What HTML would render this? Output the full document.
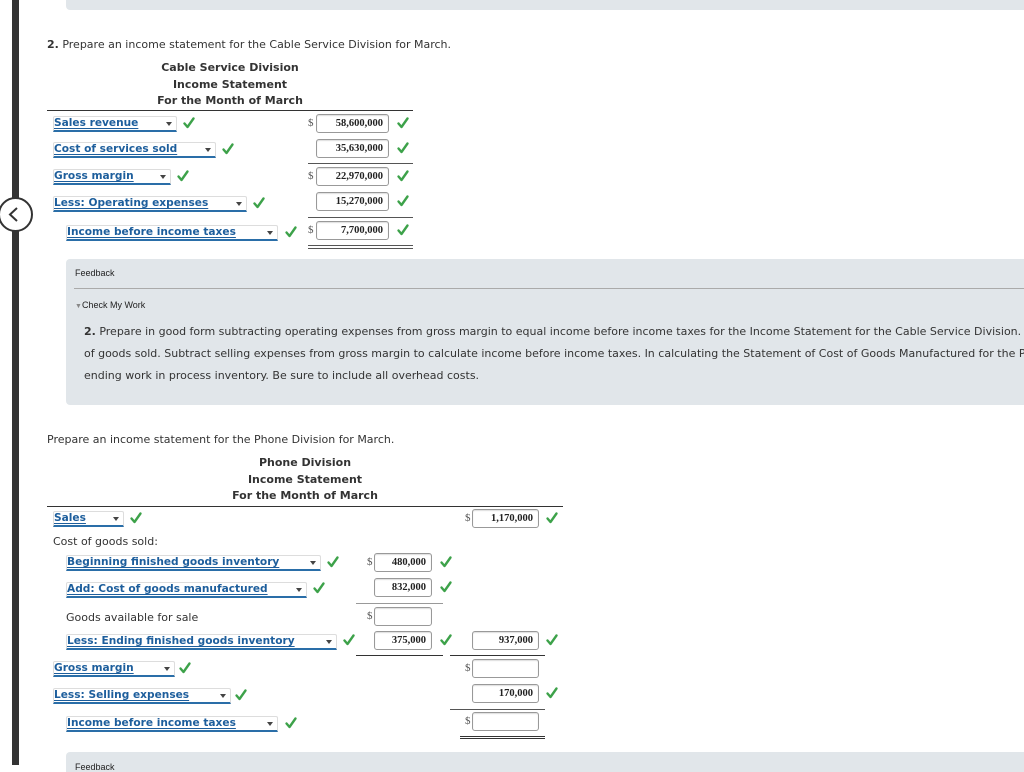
<!DOCTYPE html>
<html><head><meta charset="utf-8"><style>
*{margin:0;padding:0;box-sizing:border-box}
body{width:1024px;height:765px;overflow:hidden;background:#fff;position:relative;font-family:"DejaVu Sans","Liberation Sans",sans-serif;color:#333}
.a{position:absolute;white-space:nowrap}
.t{font-size:11px}
.b{font-weight:bold}
.sel{position:absolute;height:16px;border:1px solid #ddd;border-bottom:2px solid #2a6ea8;border-radius:2px 2px 0 0;color:#1d5e9c;font-weight:bold;font-size:10.6px;line-height:13px;padding-left:0;text-decoration:underline;text-underline-offset:2px}
.sel:after{content:"";position:absolute;right:4px;top:5px;border-left:3px solid transparent;border-right:3px solid transparent;border-top:4px solid #444}
.in{position:absolute;height:19px;border:1px solid #999;border-radius:3px;font-family:"Liberation Serif",serif;font-weight:bold;font-size:10.5px;text-align:right;padding-right:5px;line-height:17px;color:#222;box-shadow:inset 0 1px 1px #ddd}
.d{position:absolute;font-family:"Liberation Serif",serif;font-size:11px;color:#555}
.hl{position:absolute;height:1px;background:#555}
.ctr{position:absolute;text-align:center;font-weight:bold;font-size:11px;line-height:16.5px}
</style></head><body>
<div class="a" style="left:12px;top:0;width:7px;height:765px;background:#333"></div>
<div class="a" style="left:-2px;top:197px;width:35px;height:35px;border-radius:50%;background:#fff;border:2px solid #333"></div>
<svg class="a" style="left:6px;top:205px" width="16" height="19"><path d="M11 3 L4 9.5 L11 16" stroke="#333" stroke-width="2" fill="none"/></svg>
<div class="a" style="left:66px;top:0;width:960px;height:10px;background:#e1e6ea;border-radius:0 0 0 4px"></div>

<div class="a t" style="left:47px;top:38px"><b>2.</b> Prepare an income statement for the Cable Service Division for March.</div>
<div class="ctr" style="left:130px;top:60px;width:200px">Cable Service Division<br>Income Statement<br>For the Month of March</div>
<div class="hl" style="left:47px;top:110px;width:366px;background:#333"></div>

<div class="sel" style="left:53px;top:116px;width:124px">Sales revenue</div>
<div class="sel" style="left:53px;top:142px;width:163px">Cost of services sold</div>
<div class="sel" style="left:53px;top:169px;width:118px">Gross margin</div>
<div class="sel" style="left:53px;top:196px;width:194px">Less: Operating expenses</div>
<div class="sel" style="left:66px;top:225px;width:212px">Income before income taxes</div>
<div class="d" style="left:308px;top:117px">$</div>
<div class="in" style="left:316px;top:114px;width:73px">58,600,000</div>
<div class="in" style="left:316px;top:139px;width:73px">35,630,000</div>
<div class="hl" style="left:308px;top:163px;width:105px"></div>
<div class="d" style="left:308px;top:170px">$</div>
<div class="in" style="left:316px;top:167px;width:73px">22,970,000</div>
<div class="in" style="left:316px;top:192px;width:73px">15,270,000</div>
<div class="hl" style="left:308px;top:217px;width:105px"></div>
<div class="d" style="left:308px;top:224px">$</div>
<div class="in" style="left:316px;top:221px;width:73px">7,700,000</div>
<div class="hl" style="left:308px;top:245px;width:105px"></div>
<div class="hl" style="left:308px;top:248px;width:105px"></div>

<div class="a" style="left:66px;top:259px;width:960px;height:146px;background:#e1e6ea;border-radius:4px 0 0 4px"></div>
<div class="a" style="left:75px;top:268px;font-family:'Liberation Sans',sans-serif;font-size:9px;color:#222">Feedback</div>
<div class="hl" style="left:74px;top:288px;width:952px;background:#aaa"></div>
<div class="a" style="left:75px;top:300px;font-family:'Liberation Sans',sans-serif;font-size:9px;color:#222"><span style="color:#888;font-size:7px">▼</span>Check My Work</div>
<div class="a t" style="left:84px;top:321px;line-height:22px"><b>2.</b> Prepare in good form subtracting operating expenses from gross margin to equal income before income taxes for the Income Statement for the Cable Service Division. I<br>of goods sold. Subtract selling expenses from gross margin to calculate income before income taxes. In calculating the Statement of Cost of Goods Manufactured for the Pl<br>ending work in process inventory. Be sure to include all overhead costs.</div>

<div class="a t" style="left:47px;top:433px">Prepare an income statement for the Phone Division for March.</div>
<div class="ctr" style="left:205px;top:455px;width:200px">Phone Division<br>Income Statement<br>For the Month of March</div>
<div class="hl" style="left:47px;top:506px;width:516px;background:#333"></div>

<div class="sel" style="left:53px;top:511px;width:71px">Sales</div>
<div class="a t" style="left:53px;top:535px">Cost of goods sold:</div>
<div class="sel" style="left:66px;top:555px;width:255px">Beginning finished goods inventory</div>
<div class="sel" style="left:66px;top:582px;width:241px">Add: Cost of goods manufactured</div>
<div class="a t" style="left:66px;top:611px">Goods available for sale</div>
<div class="sel" style="left:66px;top:634px;width:271px">Less: Ending finished goods inventory</div>
<div class="sel" style="left:53px;top:661px;width:122px">Gross margin</div>
<div class="sel" style="left:53px;top:688px;width:178px">Less: Selling expenses</div>
<div class="sel" style="left:66px;top:716px;width:212px">Income before income taxes</div>

<div class="d" style="left:465px;top:512px">$</div>
<div class="in" style="left:472px;top:509px;width:67px">1,170,000</div>
<div class="d" style="left:367px;top:556px">$</div>
<div class="in" style="left:374px;top:553px;width:58px">480,000</div>
<div class="in" style="left:374px;top:578px;width:58px">832,000</div>
<div class="hl" style="left:356px;top:603px;width:87px;background:#999"></div>
<div class="d" style="left:367px;top:610px">$</div>
<div class="in" style="left:374px;top:607px;width:58px"></div>
<div class="in" style="left:374px;top:631px;width:58px">375,000</div>
<div class="in" style="left:472px;top:631px;width:67px">937,000</div>
<div class="hl" style="left:356px;top:655px;width:87px;background:#333"></div>
<div class="hl" style="left:450px;top:655px;width:95px;background:#333"></div>
<div class="d" style="left:465px;top:662px">$</div>
<div class="in" style="left:472px;top:659px;width:67px"></div>
<div class="in" style="left:472px;top:684px;width:67px">170,000</div>
<div class="hl" style="left:450px;top:709px;width:95px"></div>
<div class="d" style="left:465px;top:715px">$</div>
<div class="in" style="left:472px;top:712px;width:67px"></div>
<div class="hl" style="left:460px;top:736px;width:85px;background:#333"></div>
<div class="hl" style="left:460px;top:738px;width:85px;background:#333"></div>

<div class="a" style="left:66px;top:752px;width:960px;height:20px;background:#e1e6ea;border-radius:4px 0 0 0"></div>
<div class="a" style="left:75px;top:762px;font-family:'Liberation Sans',sans-serif;font-size:9px;color:#222">Feedback</div>

<svg width="1024" height="765" style="position:absolute;left:0;top:0;pointer-events:none">
<defs><path id="c" d="M1.5 6.5 L4.5 10 L10.5 1.5" stroke="#3da24a" stroke-width="2.4" fill="none" stroke-linecap="round" stroke-linejoin="round"/></defs>
<use href="#c" x="183" y="117"/><use href="#c" x="222" y="143"/><use href="#c" x="177" y="170"/><use href="#c" x="253" y="197"/><use href="#c" x="285" y="226"/>
<use href="#c" x="397" y="117"/><use href="#c" x="397" y="142"/><use href="#c" x="397" y="170"/><use href="#c" x="397" y="195"/><use href="#c" x="397" y="224"/>
<use href="#c" x="130" y="512"/><use href="#c" x="546" y="512"/><use href="#c" x="327" y="556"/><use href="#c" x="440" y="556"/><use href="#c" x="313" y="582"/><use href="#c" x="440" y="581"/>
<use href="#c" x="343" y="634"/><use href="#c" x="440" y="634"/><use href="#c" x="546" y="634"/><use href="#c" x="179" y="662"/><use href="#c" x="235" y="689"/><use href="#c" x="546" y="687"/><use href="#c" x="285" y="717"/>
</svg>
</body></html>
